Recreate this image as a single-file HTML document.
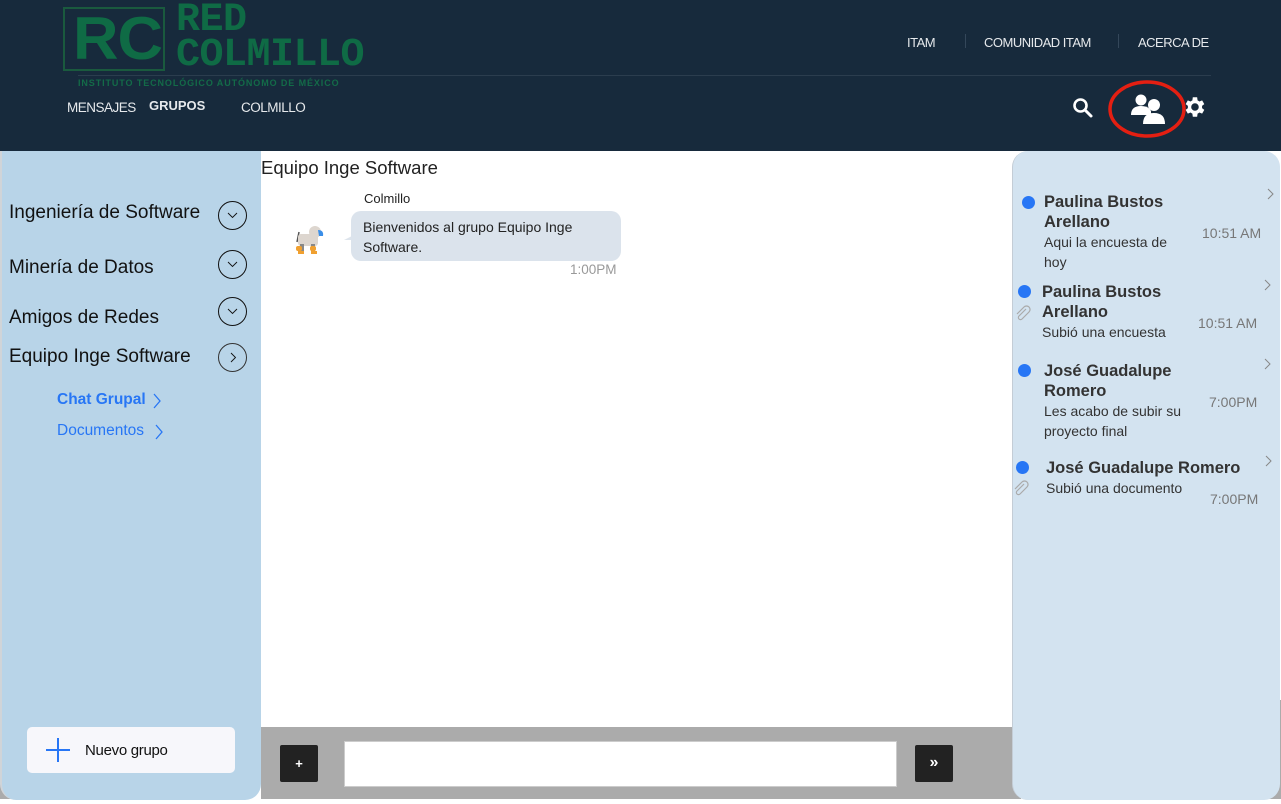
<!DOCTYPE html>
<html><head><meta charset="utf-8"><style>
*{box-sizing:border-box;margin:0;padding:0}
body{width:1281px;height:804px;background:#fff;position:relative;overflow:hidden;font-family:"Liberation Sans",sans-serif}
.hdr{position:absolute;left:0;top:0;width:1281px;height:151px;background:#172a3c}
.abs{position:absolute}
.nav{color:#e6e9ec;font-size:13px}
.left{position:absolute;left:0;top:151px;width:261px;height:649px;background:#b8d4e8;border-radius:0 0 16px 16px;border-left:2px solid #d0d4d8}
.gi{position:absolute;left:7px;font-size:19px;color:#111}
.circ{position:absolute;left:216px;width:29px;height:29px;border:1.6px solid #111;border-radius:50%}
.circ svg{position:absolute;left:7px;top:9px}
.right{position:absolute;left:1012px;top:151px;width:268px;height:649px;background:#d3e3f0;border-radius:16px;border-left:1px solid #c4cdd6}
.dot{position:absolute;width:13px;height:13px;background:#2776f5;border-radius:50%}
.nm{position:absolute;font-size:16.5px;font-weight:bold;color:#333;line-height:20px}
.msg{position:absolute;font-size:14px;color:#333;line-height:20px}
.tm{position:absolute;font-size:14px;color:#777}
.chev{position:absolute}
</style></head><body>
<div class="hdr">
  <div class="abs" style="left:63px;top:7px;width:102px;height:64px;border:2px solid #1a5a3e"></div>
  <div class="abs" style="left:73px;top:4px;font:bold 60px 'Liberation Sans Narrow','Liberation Sans',sans-serif;color:#0f6b45;letter-spacing:-1px;transform:scaleX(1.05);transform-origin:left">RC</div>
  <div class="abs" style="left:176px;top:3px;font:bold 40px 'Liberation Mono',monospace;color:#0f6b45;line-height:35px;letter-spacing:-0.5px">RED<br>COLMILLO</div>
  <div class="abs" style="left:78px;top:78px;font:bold 9px 'Liberation Sans',sans-serif;color:#136b48;letter-spacing:.9px">INSTITUTO TECNOLÓGICO AUTÓNOMO DE MÉXICO</div>
  <div class="abs" style="left:78px;top:75px;width:1133px;height:1px;background:#2b3d4e"></div>
  <div class="abs nav" style="left:67px;top:100px;font-size:13.5px;letter-spacing:-0.5px">MENSAJES</div>
  <div class="abs nav" style="left:149px;top:98px;font-weight:bold">GRUPOS</div>
  <div class="abs nav" style="left:241px;top:100px;font-size:13.5px;letter-spacing:-0.5px">COLMILLO</div>
  <div class="abs nav" style="left:907px;top:35px;letter-spacing:-0.5px">ITAM</div>
  <div class="abs" style="left:965px;top:34px;width:1px;height:14px;background:#34475a"></div>
  <div class="abs nav" style="left:984px;top:35px;letter-spacing:-0.5px">COMUNIDAD ITAM</div>
  <div class="abs" style="left:1118px;top:34px;width:1px;height:14px;background:#34475a"></div>
  <div class="abs nav" style="left:1138px;top:35px;letter-spacing:-0.5px">ACERCA DE</div>
  <svg class="abs" style="left:1072px;top:97px" width="22" height="22" viewBox="0 0 22 22"><circle cx="8.5" cy="8.5" r="6" fill="none" stroke="#fff" stroke-width="2.6"/><path d="M13 13l6 6" stroke="#fff" stroke-width="3" stroke-linecap="round"/></svg>
  <svg class="abs" style="left:1108px;top:80px" width="80" height="60"><ellipse cx="39" cy="29" rx="37" ry="27" fill="none" stroke="#e41f12" stroke-width="3.5"/>
    <circle cx="33" cy="20" r="5.5" fill="#fff"/><path d="M23 35q0-9 10-9q8 0 10 5v4z" fill="#fff"/>
    <circle cx="46" cy="25" r="6" fill="#fff"/><path d="M35 44q0-11 11-11q11 0 11 11z" fill="#fff"/></svg>
  <svg class="abs" style="left:1181px;top:94px" width="26" height="26" viewBox="0 0 24 24"><path fill="#fff" d="M19.4 13a7.5 7.5 0 000-2l2.1-1.6-2-3.5-2.5 1a7 7 0 00-1.7-1L14.9 3h-4l-.4 2.9a7 7 0 00-1.7 1l-2.5-1-2 3.5L6.4 11a7.5 7.5 0 000 2l-2.1 1.6 2 3.5 2.5-1a7 7 0 001.7 1l.4 2.9h4l.4-2.9a7 7 0 001.7-1l2.5 1 2-3.5zM12.9 15.5a3.5 3.5 0 110-7 3.5 3.5 0 010 7z"/></svg>
</div>

<div class="abs" style="left:261px;top:727px;width:760px;height:72px;background:#ababab"></div>
<div class="abs" style="left:0;top:700px;width:30px;height:99px;background:#ababab"></div>
<div class="abs" style="left:1250px;top:700px;width:31px;height:99px;background:#ababab"></div>

<div class="left">
  <div class="gi" style="top:51px">Ingeniería de Software</div>
  <div class="circ" style="top:50px"><svg width="13" height="10"><path d="M2 2l4.5 4.5L11 2" fill="none" stroke="#111" stroke-width="0.9"/></svg></div>
  <div class="gi" style="top:106px">Minería de Datos</div>
  <div class="circ" style="top:99px"><svg width="13" height="10"><path d="M2 2l4.5 4.5L11 2" fill="none" stroke="#111" stroke-width="0.9"/></svg></div>
  <div class="gi" style="top:156px">Amigos de Redes</div>
  <div class="circ" style="top:146px"><svg width="13" height="10"><path d="M2 2l4.5 4.5L11 2" fill="none" stroke="#111" stroke-width="0.9"/></svg></div>
  <div class="gi" style="top:195px">Equipo Inge Software</div>
  <div class="circ" style="top:192px;border-width:1px;border-color:#333"><svg width="13" height="13" style="left:9px;top:7px"><path d="M3 2l4.5 4.5L3 11" fill="none" stroke="#111" stroke-width="0.9"/></svg></div>
  <div class="abs" style="left:55px;top:240px;font-size:15.5px;font-weight:bold;color:#2776f5">Chat Grupal</div>
  <svg class="abs" style="left:149px;top:241px" width="12" height="18"><path d="M3 2l6 7-6 7" fill="none" stroke="#2776f5" stroke-width="1.3"/></svg>
  <div class="abs" style="left:55px;top:271px;font-size:15.5px;color:#2776f5">Documentos</div>
  <svg class="abs" style="left:151px;top:272px" width="12" height="18"><path d="M3 2l6 7-6 7" fill="none" stroke="#2776f5" stroke-width="1.3"/></svg>
  <div class="abs" style="left:25px;top:576px;width:208px;height:46px;background:#f7f7fb;border-radius:5px">
    <div class="abs" style="left:30px;top:11px;width:2px;height:24px;background:#2776f5"></div>
    <div class="abs" style="left:19px;top:22px;width:24px;height:2px;background:#2776f5"></div>
    <div class="abs" style="left:58px;top:15px;font-size:15px;color:#111;letter-spacing:-0.3px">Nuevo grupo</div>
  </div>
</div>

<div class="abs" style="left:261px;top:157px;font-size:18.5px;color:#222">Equipo Inge Software</div>
<div class="abs" style="left:364px;top:191px;font-size:13px;color:#222">Colmillo</div>
<svg class="abs" style="left:291px;top:220px" width="36" height="36"><path d="M8 12l-2 10" stroke="#555" stroke-width="1.5"/><rect x="7" y="14" width="20" height="12" rx="3" fill="#ddd6cf"/><circle cx="24" cy="12" r="6" fill="#ddd6cf"/><path d="M27 10q6 0 5 6l-4 0z" fill="#3a8ee8"/><rect x="9" y="24" width="4" height="8" fill="#888"/><rect x="20" y="24" width="4" height="8" fill="#888"/><rect x="5" y="26" width="6" height="5" rx="2" fill="#f0a030"/><rect x="19" y="26" width="6" height="5" rx="2" fill="#f0a030"/><rect x="7" y="31" width="6" height="3" fill="#f0a030"/><rect x="20" y="31" width="6" height="3" fill="#f0a030"/></svg>
<div class="abs" style="left:344px;top:236px;width:0;height:0;border-top:4px solid transparent;border-right:8px solid #dde4ec"></div>
<div class="abs" style="left:351px;top:211px;width:270px;height:50px;background:#dbe3ec;border-radius:10px;padding:6px 12px;font-size:14px;line-height:20px;color:#222">Bienvenidos al grupo Equipo Inge Software.</div>
<div class="abs" style="left:570px;top:262px;font-size:13.5px;color:#999">1:00PM</div>

<div class="abs" style="left:280px;top:745px;width:38px;height:37px;background:#222;border-radius:2px;color:#fff;font-size:13px;font-weight:bold;text-align:center;line-height:37px">+</div>
<div class="abs" style="left:344px;top:741px;width:553px;height:46px;background:#fff;border:1px solid #ccc"></div>
<div class="abs" style="left:915px;top:745px;width:38px;height:37px;background:#222;border-radius:2px;color:#fff;font-size:16px;font-weight:bold;text-align:center;line-height:36px">»</div>

<div class="right">
  <div class="dot" style="left:9px;top:45px"></div>
  <div class="nm" style="left:31px;top:41px">Paulina Bustos<br>Arellano</div>
  <div class="msg" style="left:31px;top:81px">Aqui la encuesta de<br>hoy</div>
  <div class="tm" style="left:189px;top:74px">10:51 AM</div>
  <svg class="chev" style="left:254px;top:37px" width="8" height="12"><path d="M1 1l5 5-5 5" fill="none" stroke="#888" stroke-width="1"/></svg>

  <div class="dot" style="left:5px;top:134px"></div>
  <svg class="abs" style="left:1px;top:154px" width="18" height="18" viewBox="0 0 18 18"><path d="M12 4l-7 7a2 2 0 003 3l7-7a3.5 3.5 0 00-5-5L3 9" fill="none" stroke="#aaa" stroke-width="1.2"/></svg>
  <div class="nm" style="left:29px;top:131px">Paulina Bustos<br>Arellano</div>
  <div class="msg" style="left:29px;top:171px">Subió una encuesta</div>
  <div class="tm" style="left:185px;top:164px">10:51 AM</div>
  <svg class="chev" style="left:251px;top:128px" width="8" height="12"><path d="M1 1l5 5-5 5" fill="none" stroke="#888" stroke-width="1"/></svg>

  <div class="dot" style="left:5px;top:213px"></div>
  <div class="nm" style="left:31px;top:210px">José Guadalupe<br>Romero</div>
  <div class="msg" style="left:31px;top:250px">Les acabo de subir su<br>proyecto final</div>
  <div class="tm" style="left:196px;top:243px">7:00PM</div>
  <svg class="chev" style="left:251px;top:207px" width="8" height="12"><path d="M1 1l5 5-5 5" fill="none" stroke="#888" stroke-width="1"/></svg>

  <div class="dot" style="left:3px;top:310px"></div>
  <svg class="abs" style="left:-1px;top:329px" width="18" height="18" viewBox="0 0 18 18"><path d="M12 4l-7 7a2 2 0 003 3l7-7a3.5 3.5 0 00-5-5L3 9" fill="none" stroke="#aaa" stroke-width="1.2"/></svg>
  <div class="nm" style="left:33px;top:307px">José Guadalupe Romero</div>
  <div class="msg" style="left:33px;top:327px">Subió una documento</div>
  <div class="tm" style="left:197px;top:340px">7:00PM</div>
  <svg class="chev" style="left:252px;top:304px" width="8" height="12"><path d="M1 1l5 5-5 5" fill="none" stroke="#888" stroke-width="1"/></svg>
</div>
</body></html>
